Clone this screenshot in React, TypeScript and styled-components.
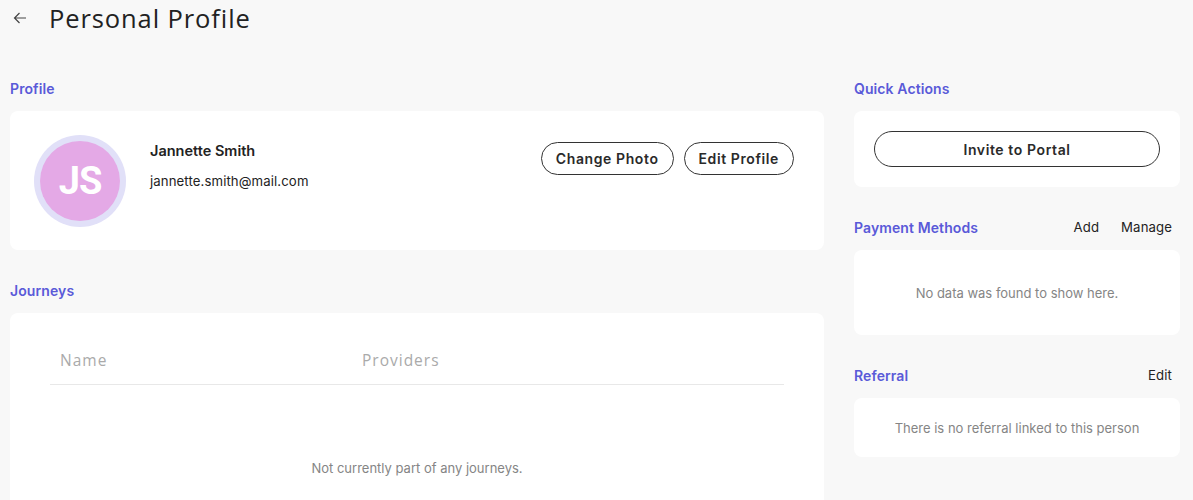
import React from "react";
import styled, { createGlobalStyle } from "styled-components";

const GlobalStyle = createGlobalStyle`
  html, body {
    margin: 0;
    padding: 0;
    background: #f8f8f8;
    font-family: Inter, "Noto Sans", sans-serif;
    color: #222;
  }
`;

const Page = styled.div`
  padding: 0 13px 0 10px;
  height: 500px;
  overflow: hidden;
  box-sizing: border-box;
`;

const Header = styled.header`
  display: flex;
  align-items: center;
  height: 36px;
  gap: 22px;
  padding-left: 3px;
`;

const BackButton = styled.button`
  border: none;
  background: none;
  padding: 0;
  display: flex;
  align-items: center;
  color: #444;
  cursor: pointer;
`;

const Title = styled.h1`
  margin: 0;
  font-family: "Open Sans", sans-serif;
  font-weight: 400;
  font-size: 25.5px;
  letter-spacing: 0.9px;
  color: #222;
`;

const Columns = styled.div`
  display: grid;
  grid-template-columns: 814px 1fr;
  gap: 30px;
  margin-top: 41px;
`;

const Column = styled.div`
  display: flex;
  flex-direction: column;
`;

const SectionHead = styled.div<{ $gap?: number }>`
  display: flex;
  align-items: center;
  justify-content: space-between;
  height: 22px;
  margin-bottom: 12px;
  margin-top: ${(p) => p.$gap ?? 0}px;
`;

const SectionTitle = styled.h2`
  margin: 0;
  font-size: 14px;
  font-weight: 600;
  color: #5a5ad8;
  letter-spacing: 0.1px;
`;

const HeadActions = styled.div`
  display: flex;
  gap: 22px;
  padding-right: 8px;
`;

const TextAction = styled.button`
  border: none;
  background: none;
  padding: 0;
  font-family: inherit;
  font-size: 13.2px;
  color: #222;
  letter-spacing: 0.1px;
  cursor: pointer;
`;

const Card = styled.div`
  background: #fff;
  border-radius: 8px;
`;

const ProfileCard = styled(Card)`
  display: flex;
  align-items: flex-start;
  height: 139px;
  padding: 24px 30px 0 24px;
  box-sizing: border-box;
`;

const Avatar = styled.div`
  width: 92px;
  height: 92px;
  border-radius: 50%;
  background: #e1e0f8;
  display: flex;
  align-items: center;
  justify-content: center;
  flex-shrink: 0;
`;

const AvatarInner = styled.div`
  width: 80px;
  height: 80px;
  border-radius: 50%;
  background: #e4a9e6;
  color: #fff;
  font-family: Roboto, sans-serif;
  font-weight: 700;
  font-size: 38px;
  display: flex;
  align-items: center;
  justify-content: center;
  letter-spacing: -1px;
`;

const Info = styled.div`
  margin-left: 24px;
  padding-top: 7px;
  flex: 1;
`;

const Name = styled.div`
  font-size: 14.5px;
  font-weight: 600;
  color: #222;
`;

const Email = styled.div`
  font-size: 13.2px;
  margin-top: 14px;
  letter-spacing: 0.1px;
  color: #222;
`;

const ButtonRow = styled.div`
  display: flex;
  gap: 10px;
  padding-top: 7px;
`;

const PillButton = styled.button<{ $wide?: boolean }>`
  height: ${(p) => (p.$wide ? 36 : 33)}px;
  padding: 0 14px;
  border: 1px solid #333;
  border-radius: 999px;
  background: #fff;
  font-family: inherit;
  font-size: 14px;
  font-weight: 600;
  letter-spacing: 0.6px;
  color: #2a2a2a;
  cursor: pointer;
  width: ${(p) => (p.$wide ? "100%" : "auto")};
`;

const JourneyCard = styled(Card)`
  padding: 36px 40px 0;
  height: 200px;
  box-sizing: border-box;
`;

const TableHead = styled.div`
  display: grid;
  grid-template-columns: 302px 1fr;
  padding: 0 10px 13px;
  border-bottom: 1px solid #e8e8e8;
`;

const HeadCell = styled.div`
  font-family: "Open Sans", sans-serif;
  font-size: 15.5px;
  color: #aaa;
  letter-spacing: 1px;
`;

const Empty = styled.div<{ $h: number }>`
  height: ${(p) => p.$h}px;
  display: flex;
  align-items: center;
  justify-content: center;
  font-size: 13px;
  color: #858585;
`;

const ActionsCard = styled(Card)`
  padding: 20px 20px;
`;

export default function App() {
  return (
    <>
      <GlobalStyle />
      <Page>
        <Header>
          <BackButton aria-label="Back">
            <svg width="14" height="14" viewBox="0 0 14 14" fill="none" stroke="#444" strokeWidth="1.2">
              <path d="M13 7H1.5M6.5 2L1.5 7l5 5" />
            </svg>
          </BackButton>
          <Title>Personal Profile</Title>
        </Header>
        <Columns>
          <Column>
            <SectionHead>
              <SectionTitle>Profile</SectionTitle>
            </SectionHead>
            <ProfileCard>
              <Avatar>
                <AvatarInner>JS</AvatarInner>
              </Avatar>
              <Info>
                <Name>Jannette Smith</Name>
                <Email>jannette.smith@mail.com</Email>
              </Info>
              <ButtonRow>
                <PillButton>Change Photo</PillButton>
                <PillButton>Edit Profile</PillButton>
              </ButtonRow>
            </ProfileCard>
            <SectionHead $gap={29}>
              <SectionTitle>Journeys</SectionTitle>
            </SectionHead>
            <JourneyCard>
              <TableHead>
                <HeadCell>Name</HeadCell>
                <HeadCell>Providers</HeadCell>
              </TableHead>
              <Empty $h={165}>Not currently part of any journeys.</Empty>
            </JourneyCard>
          </Column>
          <Column>
            <SectionHead>
              <SectionTitle>Quick Actions</SectionTitle>
            </SectionHead>
            <ActionsCard>
              <PillButton $wide>Invite to Portal</PillButton>
            </ActionsCard>
            <SectionHead $gap={29}>
              <SectionTitle>Payment Methods</SectionTitle>
              <HeadActions>
                <TextAction>Add</TextAction>
                <TextAction>Manage</TextAction>
              </HeadActions>
            </SectionHead>
            <Card>
              <Empty $h={85}>No data was found to show here.</Empty>
            </Card>
            <SectionHead $gap={29}>
              <SectionTitle>Referral</SectionTitle>
              <HeadActions>
                <TextAction>Edit</TextAction>
              </HeadActions>
            </SectionHead>
            <Card>
              <Empty $h={59}>There is no referral linked to this person</Empty>
            </Card>
          </Column>
        </Columns>
      </Page>
    </>
  );
}
